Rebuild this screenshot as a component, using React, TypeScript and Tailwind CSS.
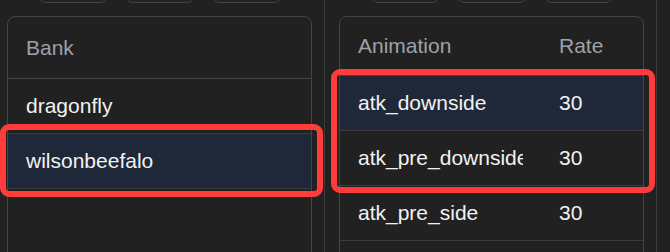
import React from 'react';

const font = { fontFamily: '"Liberation Sans", Arial, sans-serif' };

const ToolbarStub: React.FC = () => (
  // only the bottom edge of the toolbar buttons is visible at the top of the crop
  <div className="flex justify-center gap-[17px] -mt-[30px]">
    <div className="h-[33px] w-[70px] rounded-lg border border-[#444]" />
    <div className="h-[33px] w-[70px] rounded-lg border border-[#444]" />
    <div className="h-[33px] w-[70px] rounded-lg border border-[#444]" />
  </div>
);

const banks = ['dragonfly', 'wilsonbeefalo'];
const anims = [
  { name: 'atk_downside', rate: 30 },
  { name: 'atk_pre_downside', rate: 30 },
  { name: 'atk_pre_side', rate: 30 },
];

export default function App() {
  return (
    <div style={font} className="relative flex h-[252px] w-[670px] overflow-hidden bg-[#212121] text-[21px]">
      {/* Bank pane */}
      <div className="w-[325px] shrink-0 border-r border-[#3c3c3c] pl-[7px] pr-[12px]">
        <ToolbarStub />
        <div className="mt-[13px] h-[300px] rounded-lg border border-[#444]">
          <div className="flex h-[62px] items-center border-b border-[#444] pl-[18px] text-[#9ca1aa]">Bank</div>
          {banks.map((b, i) => (
            <div
              key={b}
              className={`flex h-[55px] items-center border-b border-[#3c3c3c] pl-[18px] text-[#f2f2f2] ${i === 1 ? 'bg-[#1f2838]' : ''}`}
            >
              {b}
            </div>
          ))}
        </div>
      </div>

      {/* Animation pane */}
      <div className="w-[332px] shrink-0 border-r border-[#3c3c3c] pl-[14px] pr-[12px]">
        <ToolbarStub />
        <div className="mt-[13px] h-[300px] overflow-hidden rounded-lg border border-[#444]">
          <div className="grid h-[59px] grid-cols-[201px_1fr] items-center border-b border-[#444] text-[#9ca1aa]">
            <div className="px-[18px]">Animation</div>
            <div className="px-[18px]">Rate</div>
          </div>
          {anims.map((a, i) => (
            <div
              key={a.name}
              className={`grid h-[55px] grid-cols-[201px_1fr] items-center border-b border-[#3c3c3c] text-[#f2f2f2] ${i === 0 ? 'bg-[#1f2838]' : ''}`}
            >
              <div className="overflow-hidden whitespace-nowrap px-[18px]">
                <div className="overflow-hidden">{a.name}</div>
              </div>
              <div className="px-[18px]">{a.rate}</div>
            </div>
          ))}
          {/* next row starts just below the crop */}
          <div className="h-[55px]" />
        </div>
      </div>

      <div className="flex-1" />

      {/* red annotation boxes drawn over the screenshot */}
      <div className="pointer-events-none absolute left-0 top-[124px] h-[73px] w-[323px] rounded-[9px] border-[6px] border-[#ff3b3b]" />
      <div className="pointer-events-none absolute left-[331px] top-[69px] h-[124px] w-[324px] rounded-[9px] border-[6px] border-[#ff3b3b]" />
    </div>
  );
}
